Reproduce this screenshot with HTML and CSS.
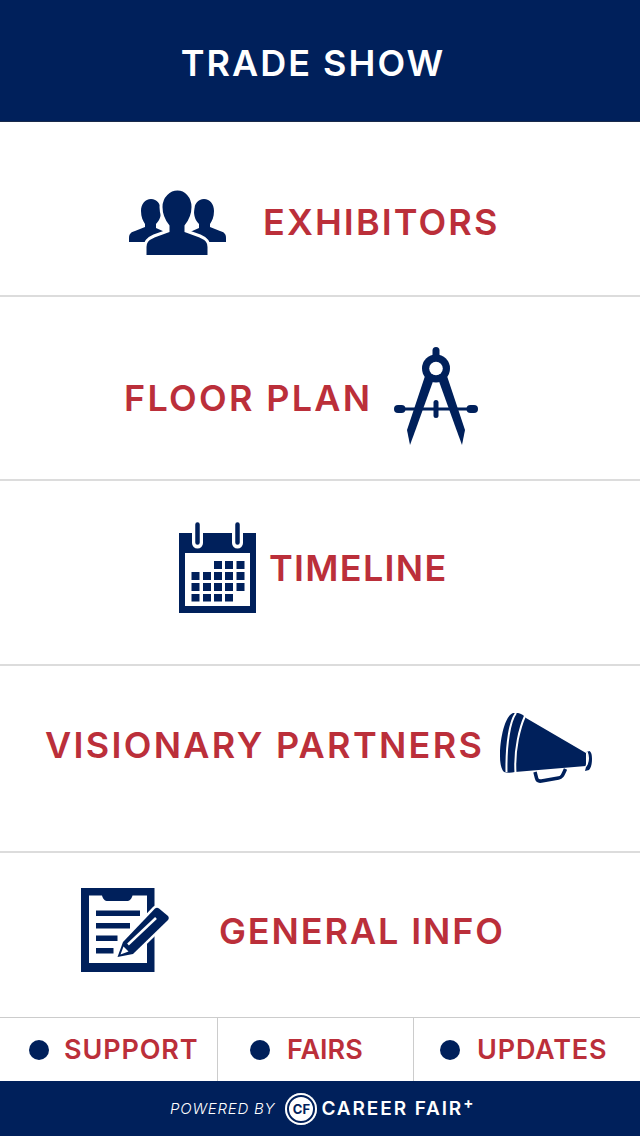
FILE: index.html
```html
<!doctype html>
<html>
  <head>
    <meta charset="utf-8">
    <title>Trade Show</title>
    <link rel="stylesheet" href="styles.css">
  </head>
  <body>
    <header class="topbar"><h1>TRADE SHOW</h1></header>

    <nav class="menu">
      <a class="row row-exhibitors">
        <svg class="icon" width="97" height="65" viewBox="0 0 97 65">
          <g fill="#00205b">
            <path d="M22 9c6 0 10 5 10 12 0 6-2 10-5 13v4l9 4-16 10H0v-4c0-4 2-6 6-7l10-4v-3c-2-3-4-7-4-13 0-7 4-12 10-12z"/>
            <path d="M75 9c-6 0-10 5-10 12 0 6 2 10 5 13v4l-9 4 16 10h20v-4c0-4-2-6-6-7l-10-4v-3c2-3 4-7 4-13 0-7-4-12-10-12z"/>
          </g>
          <path fill="#00205b" stroke="#fff" stroke-width="3" d="M48.500-1c8 0 15.500 7 15.500 18 0 8-3 14-7 19v5l14 5c7 3 9 6 9 11v10H16v-10c0-5 2-8 9-11l14-5v-5c-4-5-7-11-7-19 0-11 8.500-18 16.500-18z"/>
        </svg>
        <span class="label">EXHIBITORS</span>
      </a>
      <a class="row row-floor">
        <span class="label">FLOOR PLAN</span>
        <svg class="icon" width="84" height="98" viewBox="0 0 84 98">
          <g fill="#00205b">
            <rect x="38.500" y="0" width="7" height="14" rx="3.500"/>
            <rect x="0" y="58" width="11.500" height="8" rx="4"/>
            <rect x="72.500" y="58" width="11.500" height="8" rx="4"/>
            <rect x="8" y="60.500" width="68" height="3"/>
            <rect x="39.500" y="53" width="5" height="18" rx="2.500"/>
            <path d="M31 29l8.500 4-18 50L16 98l-3-15z"/>
            <path d="M53 29l-8.500 4 18 50L68 98l3-15z"/>
            <circle cx="42" cy="21.500" r="14"/>
          </g>
          <circle cx="42" cy="21.500" r="6.800" fill="#fff"/>
        </svg>
      </a>
      <a class="row row-timeline">
        <svg class="icon" width="77" height="91" viewBox="0 0 77 91">
          <path fill="#00205b" d="M0 11h77v80H0z"/>
          <path fill="#fff" d="M6 31h65v53H6z"/>
          <path fill="#fff" d="M13 11v10a5.500 5.500 0 0 0 11 0V11zM53 11v10a5.500 5.500 0 0 0 11 0V11z"/>
          <g fill="none" stroke="#00205b" stroke-width="4.500" stroke-linecap="round">
            <path d="M18.500 2.500v18M58.500 2.500v18"/>
          </g>
          <g fill="#00205b">
            <rect x="35" y="39" width="8" height="8"/><rect x="46" y="39" width="8" height="8"/><rect x="57.500" y="39" width="8" height="8"/>
            <rect x="12.500" y="50" width="8" height="8"/><rect x="24" y="50" width="8" height="8"/><rect x="35" y="50" width="8" height="8"/><rect x="46" y="50" width="8" height="8"/><rect x="57.500" y="50" width="8" height="8"/>
            <rect x="12.500" y="61" width="8" height="8"/><rect x="24" y="61" width="8" height="8"/><rect x="35" y="61" width="8" height="8"/><rect x="46" y="61" width="8" height="8"/><rect x="57.500" y="61" width="8" height="8"/>
            <rect x="12.500" y="72" width="8" height="7.500"/><rect x="24" y="72" width="8" height="7.500"/><rect x="35" y="72" width="8" height="7.500"/><rect x="46" y="72" width="8" height="7.500"/>
          </g>
        </svg>
        <span class="label">TIMELINE</span>
      </a>
      <a class="row row-partners">
        <span class="label">VISIONARY PARTNERS</span>
        <svg class="icon" width="92" height="70" viewBox="0 0 92 70">
          <path fill="#00205b" d="M13 0c5-1 10 1 13 5l60 35 0 13-71 6c-4 1-8 1-11 0C1 56 0 50 0 43 0 25 5 3 13 0z"/>
          <path fill="#00205b" d="M88 46c0-3-.500-5-1.500-7l3-1c1.500 1 2.500 3 2.500 8s-1 9-3 11l-4 1 1-4c1.500-2 2-5 2-8z"/>
          <g fill="none" stroke="#fff">
            <path stroke-width="2" d="M16 0C10 8 6 30 6.500 59"/>
            <path stroke-width="2" d="M25 3C20 14 14 36 15.500 60"/>
            <path stroke-width="1.500" d="M87 39c1.500 4 1.500 10-1 14"/>
          </g>
          <path fill="none" stroke="#00205b" stroke-width="3.500" d="M35 59l1.500 6c.500 2.500 2 3.500 5 3l17-3c3-.500 4-2 7-9"/>
        </svg>
      </a>
      <a class="row row-info">
        <svg class="icon" width="88" height="84" viewBox="0 0 88 84">
          <path fill="#00205b" d="M0 0h73.500v84H0z"/>
          <path fill="#fff" d="M8 7.500h13c1 3.500 2.500 5.500 6 5.500h18.500c3.500 0 5-2 6-5.500H66V75H8z"/>
          <g fill="#00205b">
            <rect x="15" y="22.500" width="44" height="5.500"/>
            <rect x="15" y="35" width="34" height="5.500"/>
            <rect x="15" y="47.500" width="21.500" height="5.500"/>
            <rect x="15" y="60" width="17.500" height="5.500"/>
          </g>
          <path class="pencil" fill="#00205b" stroke="#fff" stroke-width="5" stroke-linejoin="round" d="M36.500 69l5.500-15L74 20.500q2-1.500 4 0l9 7.500q1.500 2 0 4L52 66z"/>
          <path fill="none" stroke="#fff" stroke-width="2.500" d="M47 56.500L75 30"/>
          <path fill="#fff" d="M39.500 66.500l3-8 5 5z"/>
        </svg>
        <span class="label">GENERAL INFO</span>
      </a>
    </nav>

    <div class="tabs">
      <a class="tab tab-support"><i class="dot"></i>SUPPORT</a>
      <a class="tab tab-fairs"><i class="dot"></i>FAIRS</a>
      <a class="tab tab-updates"><i class="dot"></i>UPDATES</a>
    </div>

    <footer class="powered">
      <em>POWERED BY</em>
      <span class="cf-badge">CF</span>
      <span class="brand">CAREER FAIR<sup>+</sup></span>
    </footer>
  </body>
</html>
```

FILE: styles.css
```css
* {
  box-sizing: border-box;
}

html, body {
  margin: 0;
  padding: 0;
}

body {
  width: 640px;
  height: 1136px;
  display: flex;
  flex-direction: column;
  background: #fff;
  font-family: Inter, "Open Sans", sans-serif;
  overflow: hidden;
}

.topbar {
  height: 122px;
  padding-top: 5px;
  padding-right: 14px;
  background: #00205b;
  display: flex;
  align-items: center;
  justify-content: center;
  border-bottom: 1px solid #1a2a4a;
}

.topbar h1 {
  margin: 0;
  color: #fff;
  font-size: 36px;
  font-weight: 600;
  letter-spacing: 2px;
}

.menu {
  flex: 1;
  display: flex;
  flex-direction: column;
}

.row {
  display: flex;
  align-items: center;
  border-bottom: 2px solid #dcdcdc;
}

.label {
  color: #bb2f3a;
  font-size: 36px;
  font-weight: 600;
  white-space: nowrap;
}

.icon {
  flex: none;
}

.pencil {
  paint-order: stroke;
}

.row-exhibitors {
  height: 175px;
  padding: 27px 0 0 129px;
  gap: 37px;
}

.row-exhibitors .label {
  letter-spacing: 2.1px;
}

.row-exhibitors .icon {
  margin-top: 1px;
}

.row-floor {
  height: 184px;
  padding: 20px 0 0 124px;
  gap: 21px;
}

.row-floor .label {
  letter-spacing: 2.3px;
}

.row-floor .icon {
  margin-bottom: 4px;
}

.row-timeline {
  height: 185px;
  padding: 0 0 10px 179px;
  gap: 13px;
}

.row-timeline .label {
  letter-spacing: 1.3px;
}

.row-partners {
  height: 187px;
  padding: 0 0 28px 45px;
  gap: 16px;
}

.row-partners .label {
  letter-spacing: 2.3px;
}

.row-partners .icon {
  margin-top: 6px;
}

.row-info {
  flex: 1;
  padding: 0 0 9px 81px;
  gap: 50px;
  border-bottom: 0;
}

.row-info .label {
  letter-spacing: 1.9px;
}

.row-info .icon {
  margin-bottom: 2px;
}

.tabs {
  height: 64px;
  display: flex;
  border-top: 1px solid #ccc;
}

.tab {
  display: flex;
  align-items: center;
  color: #bb2f3a;
  font-size: 27px;
  font-weight: 600;
}

.tab-support {
  width: 218px;
  padding-left: 29px;
  gap: 15px;
  border-right: 1px solid #ccc;
  letter-spacing: .85px;
}

.tab-fairs {
  width: 196px;
  padding-left: 32px;
  gap: 17px;
  border-right: 1px solid #ccc;
}

.tab-updates {
  flex: 1;
  padding-left: 26px;
  gap: 17px;
  letter-spacing: .8px;
}

.dot {
  width: 20px;
  height: 20px;
  border-radius: 50%;
  background: #00205b;
}

.powered {
  height: 55px;
  background: #00205b;
  color: #fff;
  display: flex;
  align-items: center;
  padding-left: 170px;
}

.powered em {
  font-size: 15px;
  letter-spacing: .8px;
  font-weight: 300;
}

.cf-badge {
  width: 32px;
  height: 32px;
  margin-left: 10px;
  border-radius: 50%;
  background: #fff;
  box-shadow: inset 0 0 0 2px #fff, inset 0 0 0 4px #00205b;
  color: #00205b;
  display: flex;
  align-items: center;
  justify-content: center;
  font-size: 13px;
  font-weight: 700;
}

.brand {
  margin-left: 4px;
  font-size: 19px;
  font-weight: 600;
  letter-spacing: 1.9px;
}

.brand sup {
  font-size: 15px;
  font-weight: 700;
  line-height: 0;
}
```
